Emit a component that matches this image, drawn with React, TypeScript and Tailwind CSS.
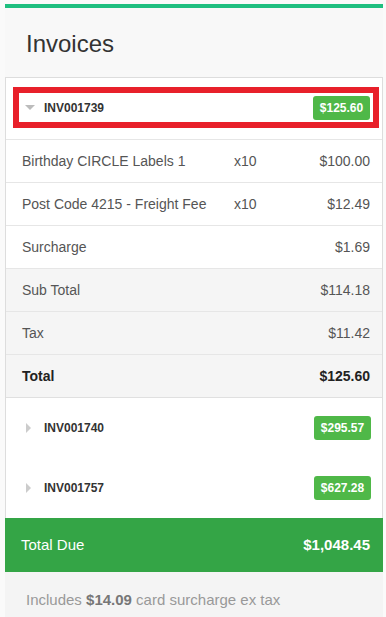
import React from 'react'

const items = [
  { name: 'Birthday CIRCLE Labels 1', qty: 'x10', amount: '$100.00' },
  { name: 'Post Code 4215 - Freight Fee', qty: 'x10', amount: '$12.49' },
  { name: 'Surcharge', qty: '', amount: '$1.69' },
]

const totals = [
  { label: 'Sub Total', amount: '$114.18', bold: false },
  { label: 'Tax', amount: '$11.42', bold: false },
  { label: 'Total', amount: '$125.60', bold: true },
]

function Badge({ children }: { children: React.ReactNode }) {
  return (
    <span className="flex h-6 w-[57px] items-center justify-center rounded-[3px] bg-[#4fb848] text-[12px] font-bold text-white">
      {children}
    </span>
  )
}

function CaretDown() {
  return (
    <svg width="10" height="5" viewBox="0 0 10 5" className="shrink-0">
      <path d="M0 0h10L5 5z" fill="#bcbcbc" />
    </svg>
  )
}

function CaretRight() {
  return (
    <svg width="5" height="10" viewBox="0 0 5 10" className="shrink-0">
      <path d="M0 0l5 5-5 5z" fill="#cccccc" />
    </svg>
  )
}

function CollapsedInvoice({ id, amount }: { id: string; amount: string }) {
  return (
    <div className="flex h-[60px] items-center pl-[20px] pr-[11px]">
      <CaretRight />
      <span className="ml-[13px] flex-1 text-[12px] font-bold text-[#333]">{id}</span>
      <Badge>{amount}</Badge>
    </div>
  )
}

export default function App() {
  return (
    <div className="min-h-screen bg-[#fafafa] px-[5px] pt-[4px] font-['Liberation_Sans',Arial,sans-serif]">
      <div className="w-[378px]">
        <div className="h-1 bg-[#1fbf80]" />

        {/* header */}
        <div className="h-[69px] bg-[#f8f8f8] pl-[21px] pt-[22px]">
          <h1 className="text-[24px] leading-[28px] text-[#333]">Invoices</h1>
        </div>

        {/* invoice list */}
        <div className="border border-b-0 border-[#dddddd] bg-white">
          <div className="pb-[11px] pl-[7px] pr-[3px] pt-[9px]">
            <div className="flex h-[41px] items-center border-[6px] border-[#e8202a] pl-[6px] pr-[3px]">
              <CaretDown />
              <span className="ml-[9px] flex-1 text-[12px] font-bold text-[#333]">INV001739</span>
              <Badge>$125.60</Badge>
            </div>
          </div>

          {items.map((it) => (
            <div
              key={it.name}
              className="flex h-[43px] items-center border-t border-[#e6e6e6] pl-4 pr-3 text-[14px] text-[#555]"
            >
              <span className="w-[212px]">{it.name}</span>
              <span className="w-[60px]">{it.qty}</span>
              <span className="flex-1 text-right">{it.amount}</span>
            </div>
          ))}

          {totals.map((t) => (
            <div
              key={t.label}
              className={`flex h-[43px] items-center border-t border-[#e6e6e6] bg-[#f5f5f5] pl-4 pr-3 text-[14px] ${
                t.bold ? 'font-bold text-[#222]' : 'text-[#555]'
              }`}
            >
              <span className="flex-1">{t.label}</span>
              <span>{t.amount}</span>
            </div>
          ))}

          <div className="border-t border-[#e0e0e0]">
            <CollapsedInvoice id="INV001740" amount="$295.57" />
            <CollapsedInvoice id="INV001757" amount="$627.28" />
          </div>
        </div>

        {/* total due */}
        <div className="flex h-[54px] items-center bg-[#34a546] pl-4 pr-[13px] text-[15px] text-white">
          <span className="flex-1">Total Due</span>
          <span className="font-bold">$1,048.45</span>
        </div>

        <div className="h-[45px] bg-[#f4f4f4] pl-[21px] pt-[19px] text-[15px] leading-[17px] text-[#999]">
          Includes <span className="font-bold text-[#777]">$14.09</span> card surcharge ex tax
        </div>
      </div>
    </div>
  )
}
